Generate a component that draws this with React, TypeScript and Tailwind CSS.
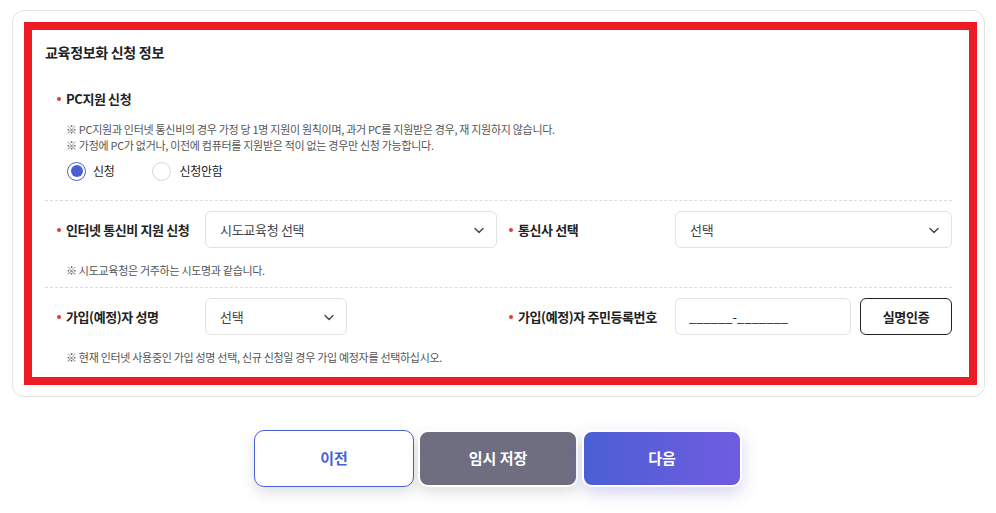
import React from "react";

const FONT = { fontFamily: '"Noto Sans CJK KR", "Noto Sans", sans-serif' };

function Chevron() {
  return (
    <svg width="14" height="14" viewBox="0 0 14 14" fill="none" className="shrink-0">
      <path d="M3 5.5 L7 9.5 L11 5.5" stroke="#444" strokeWidth="1.4" strokeLinecap="round" strokeLinejoin="round" />
    </svg>
  );
}

function Label({ text, className = "" }: { text: string; className?: string }) {
  return (
    <div className={"flex items-center text-[13px] font-bold text-[#222] tracking-[-0.4px] " + className}>
      <span className="w-[4px] h-[4px] rounded-full bg-[#e03a3a] mr-[5px] ml-[-1px]" />
      <span>{text}</span>
    </div>
  );
}

function Select({ text, className = "" }: { text: string; className?: string }) {
  return (
    <div className={"h-[37px] border border-[#e2e2e2] rounded-[6px] bg-white flex items-center justify-between pl-[14px] pr-[10px] " + className}>
      <span className="text-[13px] text-[#444] tracking-[-0.3px]">{text}</span>
      <Chevron />
    </div>
  );
}

function Note({ children }: { children: React.ReactNode }) {
  return <div className="text-[11px] leading-[16px] text-[#555] tracking-[-0.3px] pl-[8px]">{children}</div>;
}

export default function App() {
  return (
    <div style={FONT} className="w-[996px] h-[513px] bg-white">
      <div className="pt-[10px] pl-[12px] pr-[11px]">
        <div className="border border-[#e3e3e3] rounded-[12px] pt-[11px] pb-[11px] pl-[11px] pr-[7px]">
          <div className="border-[8px] border-[#ed1c24] pl-[13px] pr-[17px] pt-[12px] pb-[12px]">
            <div className="text-[14px] leading-[20px] font-bold text-[#222] tracking-[-0.3px]">교육정보화 신청 정보</div>

            <div className="pl-[13px] mt-[27px]">
              <Label text="PC지원 신청" className="h-[20px]" />
              <div className="mt-[12px]">
                <Note>※ PC지원과 인터넷 통신비의 경우 가정 당 1명 지원이 원칙이며, 과거 PC를 지원받은 경우, 재 지원하지 않습니다.</Note>
                <Note>※ 가정에 PC가 없거나, 이전에 컴퓨터를 지원받은 적이 없는 경우만 신청 가능합니다.</Note>
              </div>
              <div className="mt-[8px] h-[20px] flex items-center pl-[9px] text-[12px] text-[#222] tracking-[-0.3px]">
                <div className="w-[19px] h-[19px] rounded-full border border-[#4a5fd6] flex items-center justify-center">
                  <div className="w-[12px] h-[12px] rounded-full bg-[#4a5fd6]" />
                </div>
                <span className="ml-[7px]">신청</span>
                <div className="ml-[38px] w-[19px] h-[19px] rounded-full border border-[#d6d6d6]" />
                <span className="ml-[8px]">신청안함</span>
              </div>
            </div>

            <div className="mt-[19px] border-t border-dashed border-[#dcdcdc]" />

            <div className="pl-[13px] mt-[10px] flex items-center">
              <Label text="인터넷 통신비 지원 신청" className="w-[147px]" />
              <Select text="시도교육청 선택" className="w-[292px]" />
              <Label text="통신사 선택" className="w-[165px] ml-[13px]" />
              <Select text="선택" className="flex-1" />
            </div>
            <div className="pl-[13px] mt-[14px]">
              <Note>※ 시도교육청은 거주하는 시도명과 같습니다.</Note>
            </div>

            <div className="mt-[9px] border-t border-dashed border-[#dcdcdc]" />

            <div className="pl-[13px] mt-[10px] flex items-center">
              <Label text="가입(예정)자 성명" className="w-[147px]" />
              <div className="w-[292px]">
                <Select text="선택" className="w-[142px]" />
              </div>
              <Label text="가입(예정)자 주민등록번호" className="w-[165px] ml-[13px]" />
              <div className="w-[176px] h-[37px] border border-[#e2e2e2] rounded-[6px] flex items-center pl-[13px] text-[13px] text-[#222]">
                ______-_______
              </div>
              <button className="ml-[9px] flex-1 h-[37px] border border-[#222] rounded-[6px] bg-white text-[13px] font-bold text-[#222] tracking-[-0.3px]">
                실명인증
              </button>
            </div>
            <div className="pl-[13px] mt-[14px]">
              <Note>※ 현재 인터넷 사용중인 가입 성명 선택, 신규 신청일 경우 가입 예정자를 선택하십시오.</Note>
            </div>
          </div>
        </div>
      </div>

      <div className="mt-[33px] flex justify-center gap-[4px]">
        <button className="w-[160px] h-[57px] rounded-[10px] border border-[#4a5fd6] bg-white text-[15px] font-bold text-[#4a5fd6] shadow-[0_6px_14px_rgba(0,0,0,0.12)]">
          이전
        </button>
        <button className="w-[160px] h-[57px] rounded-[10px] border-2 border-white bg-[#6e6e80] text-[15px] font-bold text-white shadow-[0_6px_14px_rgba(0,0,0,0.12)]">
          임시 저장
        </button>
        <button className="w-[160px] h-[57px] rounded-[10px] border-2 border-white bg-gradient-to-r from-[#4a5fd4] to-[#6f5ce0] text-[15px] font-bold text-white shadow-[0_6px_16px_rgba(90,80,220,0.25)]">
          다음
        </button>
      </div>
    </div>
  );
}
